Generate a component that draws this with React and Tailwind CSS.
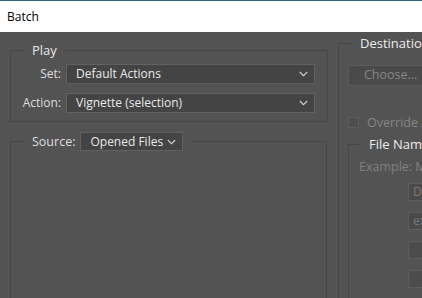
import React from "react";

function Chevron() {
  return (
    <svg width="9" height="6" viewBox="0 0 9 6" className="shrink-0">
      <path d="M0.8 1 L4.5 4.7 L8.2 1" fill="none" stroke="#cfcfcf" strokeWidth="1.1" />
    </svg>
  );
}

function Select({ children, className = "" }) {
  return (
    <div className={"bg-[#444444] border border-[#616161] flex items-center justify-between text-[#e8e8e8] " + className}>
      <span className="whitespace-nowrap">{children}</span>
      <Chevron />
    </div>
  );
}

export default function App() {
  return (
    <div className="w-[422px] h-[298px] overflow-hidden flex flex-col bg-[#535353] text-[12px] text-[#dedede] font-['Open_Sans',sans-serif]">
      <div className="h-[1px] bg-[#2d5f8f] shrink-0" />
      <div className="h-[31px] shrink-0 bg-white flex items-center pl-[7px] text-[12px] text-black">Batch</div>
      <div className="flex flex-1 min-h-0">
        {/* left column */}
        <div className="w-[328px] shrink-0 pl-[10px] flex flex-col">
          <fieldset className="mt-[10px] w-[318px] border border-[#464646]">
            <legend className="ml-[13px] px-[8px] leading-[16px] text-[13px] text-[#e8e8e8]">Play</legend>
            <div className="grid grid-cols-[50px_249px] gap-x-[5px] gap-y-[9px] items-center pt-[6px] pb-[8px]">
              <div className="text-right leading-[16px]">Set:</div>
              <Select className="h-[20px] pl-[9px] pr-[6px]">Default Actions</Select>
              <div className="text-right leading-[16px]">Action:</div>
              <Select className="h-[20px] pl-[9px] pr-[6px]">Vignette (selection)</Select>
            </div>
          </fieldset>
          <fieldset className="mt-[10px] w-[317px] h-[220px] border border-[#464646] shrink-0">
            <legend className="ml-[13px] px-[8px] flex items-center gap-[5px]">
              <span className="leading-[16px] text-[12.5px]">Source:</span>
              <Select className="h-[19px] w-[103px] pl-[9px] pr-[6px]">Opened Files</Select>
            </legend>
          </fieldset>
        </div>
        {/* right column */}
        <div className="w-[300px] shrink-0 pl-[10px]">
          <fieldset className="mt-[3px] w-[260px] h-[300px] border border-[#464646]">
            <legend className="ml-[13px] px-[8px] leading-[16px] text-[13px] text-[#ececec]">Destination</legend>
            <div className="pl-[9px] flex flex-col">
              <div className="mt-[14px] h-[21px] w-[100px] bg-[#4a4a4a] border border-[#5b5b5b] flex items-center pl-[15px] text-[#858585] text-[12.5px]">Choose...</div>
              <div className="mt-[31px] flex items-center gap-[8px] h-[11px]">
                <div className="w-[11px] h-[11px] border border-[#5d5d5d] bg-[#4e4e4e]" />
                <span className="whitespace-nowrap text-[#858585] text-[12.5px] leading-[16px]">Override Action "Save As" Commands</span>
              </div>
              <fieldset className="mt-[8px] ml-0 w-[200px] h-[200px] border border-[#464646]">
                <legend className="ml-[12px] px-[8px] leading-[16px] text-[13px] text-[#ececec] whitespace-nowrap">File Naming</legend>
                <div className="pl-[10px] flex flex-col">
                  <div className="mt-[7px] leading-[16px] text-[#808080] text-[12.5px] whitespace-nowrap">Example: MyFile.gif</div>
                  <div className="mt-[8px] ml-[49px] flex flex-col gap-[11px]">
                    <div className="h-[18px] w-[120px] bg-[#4a4a4a] border border-[#5d5d5d] flex items-center pl-[4px] text-[#7a7a7a] text-[12px] whitespace-nowrap">Document Name</div>
                    <div className="h-[18px] w-[120px] bg-[#4a4a4a] border border-[#5d5d5d] flex items-center pl-[4px] text-[#7a7a7a] text-[12px] whitespace-nowrap">extension</div>
                    <div className="h-[18px] w-[120px] bg-[#4c4c4c] border border-[#5d5d5d]" />
                    <div className="h-[18px] w-[120px] bg-[#4c4c4c] border border-[#5d5d5d]" />
                  </div>
                </div>
              </fieldset>
            </div>
          </fieldset>
        </div>
      </div>
    </div>
  );
}
